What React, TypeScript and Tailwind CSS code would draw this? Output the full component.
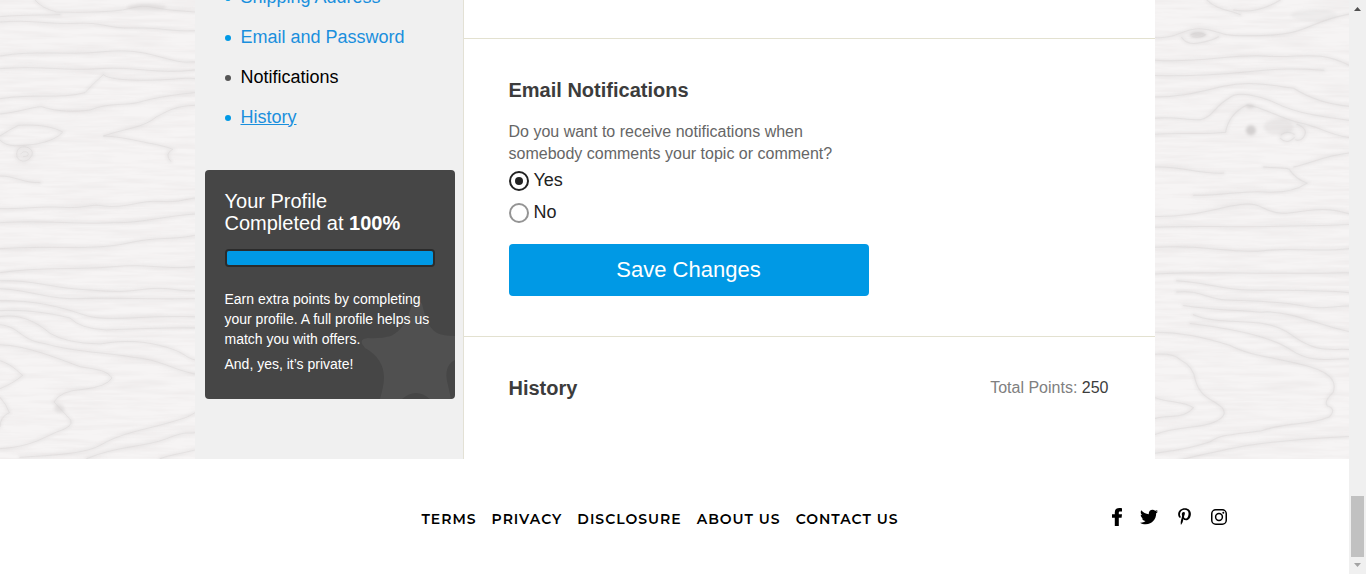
import { useState } from "react";
import type { ReactNode } from "react";
import { FaTwitter, FaPinterestP } from "react-icons/fa";

const leftGrain = [
  "M105 0 Q125 25 170 36 C260 38 300 36 350 32 S410 12 460 22 S540 32 585 36",
  "M0 50 C70 44 130 46 180 44",
  "M0 66 C90 58 150 74 230 70 S320 86 400 84 S520 96 585 92",
  "M0 168 C100 150 200 166 300 156 S440 160 500 176 S560 184 585 186",
  "M0 206 C120 196 200 214 300 206 S470 224 585 210",
  "M0 296 C100 280 180 298 255 278 Q280 250 310 224 C330 240 400 242 470 240 S550 232 585 236",
  "M0 342 C60 336 90 322 125 320 C170 336 230 336 270 330 C330 306 380 318 420 306 S520 284 585 278",
  "M0 408 Q30 388 55 376 C110 372 160 380 188 396 Q170 420 110 432 C60 438 20 444 0 420",
  "M585 316 C520 318 500 336 470 350 C430 384 380 384 310 408 C360 410 400 420 440 428 S500 440 518 448 Q492 462 512 484",
  "M50 462 Q50 440 75 440 Q102 446 96 466 Q80 492 58 480 Q48 472 50 462",
  "M62 462 Q70 450 84 458 Q88 470 70 470",
  "M0 528 C40 526 70 550 120 548",
  "M0 626 C60 628 120 618 190 622 S270 610 310 618 C380 626 420 600 480 604 S550 598 585 594",
  "M0 668 C120 660 240 674 340 668 C420 670 480 650 585 642",
  "M0 746 C150 736 280 752 380 730 S500 722 585 706",
  "M0 818 C120 800 240 810 340 800 S500 810 585 800",
  "M0 842 C100 840 150 862 240 868 S360 878 430 868 S540 876 585 872",
  "M0 866 C90 870 150 900 240 896 S400 898 585 896",
  "M0 902 C100 900 180 920 250 944 S400 946 585 950",
  "M0 932 C60 928 140 936 210 954 Q240 986 320 990 S480 982 585 984",
  "M0 950 C60 940 110 966 150 1000 Q200 1030 300 1032 C380 1018 440 1024 500 1042 S550 1070 585 1080",
  "M0 974 C60 980 60 1020 130 1030 C230 1058 330 1058 400 1072 C480 1078 520 1110 585 1122",
  "M0 1034 C80 1036 180 1078 240 1100 C300 1110 320 1112 336 1134 Q320 1160 250 1168 Q180 1172 162 1206 Q190 1236 212 1260 Q222 1280 170 1296 C120 1318 90 1340 0 1346",
  "M0 1082 C40 1096 50 1112 68 1126 Q40 1150 0 1166 M0 1192 Q20 1214 28 1238 Q0 1250 0 1280",
  "M60 1372 C140 1366 250 1364 300 1336 C360 1300 430 1290 500 1270 S560 1252 585 1238",
  "M260 1376 C340 1340 440 1340 500 1316 S560 1302 585 1298",
  "M480 1376 C510 1364 550 1360 585 1350",
];

const rightGrain = [
  "M170 0 C200 30 240 30 270 44 M250 30 C300 38 340 30 390 0",
  "M15 112 C80 118 100 84 150 86 S200 104 250 106 S360 110 420 98 S500 60 597 42",
  "M95 112 Q110 136 150 128 T205 110 M122 104 Q145 92 166 104 Q150 116 126 110",
  "M15 226 C120 230 220 222 300 214 S430 204 520 210",
  "M15 180 C150 190 250 160 350 168 S500 146 597 196",
  "M15 290 C100 290 160 272 220 258 C300 240 380 258 430 264 C480 296 530 312 597 318",
  "M15 354 C70 348 110 360 150 358 C190 350 190 320 236 294 C260 270 330 286 380 310 C440 340 520 350 597 360",
  "M15 402 C90 396 160 404 226 396 Q236 340 290 314 C340 320 390 356 450 368 S530 402 597 412",
  "M392 404 Q408 388 432 402 M390 414 Q410 434 432 412 M440 372 Q476 386 460 410 Q450 424 436 418",
  "M340 500 C370 504 400 500 416 506 Q436 536 470 548 C430 576 380 578 330 574 S200 588 130 584",
  "M430 500 C480 490 520 466 597 458",
  "M15 500 C90 496 140 520 220 518",
  "M15 648 C130 650 200 622 270 612 S340 640 400 638 S510 612 597 640",
  "M15 680 C150 674 300 684 597 672",
  "M15 740 C160 730 240 760 340 750 S500 756 597 744",
  "M15 820 C170 810 320 822 597 816",
  "M80 840 C180 846 200 866 300 868 S500 866 597 876",
  "M80 874 C150 866 170 896 230 898 S400 902 460 916 S550 914 597 916",
  "M100 914 C200 930 260 926 330 934 C420 926 520 980 597 992",
  "M130 942 C220 980 340 940 420 1000 S540 1042 597 1046",
  "M120 968 C220 980 350 1000 420 1046 S540 1070 597 1074",
  "M15 994 C100 994 180 1014 240 1034 C300 1066 380 1070 450 1090 C540 1110 560 1140 548 1174 Q520 1200 530 1214 Q560 1224 536 1248 C470 1276 420 1260 330 1290 C250 1300 210 1300 180 1322 C120 1344 60 1350 15 1356",
  "M15 1060 Q70 1056 90 1076 Q130 1096 136 1138 C150 1190 190 1196 216 1220 Q236 1244 190 1264 C150 1282 80 1274 15 1300",
  "M15 1190 C60 1206 100 1200 130 1220 Q110 1246 60 1246 Q30 1248 15 1252",
  "M90 1376 C180 1356 250 1336 340 1326 S500 1310 597 1306",
];

type Knot = { cx: number; cy: number; rx: number; ry: number; opacity: number };

const leftKnots: Knot[] = [
  { cx: 440, cy: 22, rx: 60, ry: 12, opacity: 0.35 },
  { cx: 178, cy: 1226, rx: 16, ry: 14, opacity: 0.35 },
];

const rightKnots: Knot[] = [
  { cx: 302, cy: 390, rx: 15, ry: 15, opacity: 0.9 },
  { cx: 300, cy: 318, rx: 12, ry: 7, opacity: 0.6 },
  { cx: 385, cy: 380, rx: 45, ry: 24, opacity: 0.3 },
  { cx: 144, cy: 103, rx: 22, ry: 8, opacity: 0.6 },
  { cx: 490, cy: 45, rx: 70, ry: 18, opacity: 0.2 },
];

type WoodProps = { id: string; grain: string[]; knots: Knot[]; viewBox: string };

function WoodPanel({ id, grain, knots, viewBox }: WoodProps) {
  return (
    <div className="relative min-w-0 overflow-hidden bg-[#f6f4f4]" aria-hidden="true">
      <svg className="absolute inset-0 h-full w-full" viewBox={viewBox} preserveAspectRatio="xMinYMin slice">
        <defs>
          <filter id={`${id}-noise`} x="0" y="0" width="100%" height="100%" colorInterpolationFilters="sRGB">
            <feTurbulence type="fractalNoise" baseFrequency="0.006 0.07" numOctaves="3" seed="4" />
            <feColorMatrix values="0 0 0 0 0.86  0 0 0 0 0.84  0 0 0 0 0.84  0.5 0 0 0 -0.18" />
          </filter>
          <filter id={`${id}-soft`} x="-50%" y="-50%" width="200%" height="200%">
            <feGaussianBlur stdDeviation="5" />
          </filter>
        </defs>
        <rect width="620" height="1380" filter={`url(#${id}-noise)`} />
        <g fill="none" strokeLinecap="round">
          <g filter={`url(#${id}-soft)`}>
            {grain.map((d) => (
              <path key={d} d={d} stroke="#dad6d6" strokeOpacity="0.35" strokeWidth="12" />
            ))}
            {knots.map((k) => (
              <ellipse key={`${k.cx}-${k.cy}`} cx={k.cx} cy={k.cy} rx={k.rx} ry={k.ry} fill="#cfcccc" fillOpacity={k.opacity} />
            ))}
          </g>
          {grain.map((d) => (
            <path key={d} d={d} stroke="#d0cccc" strokeOpacity="0.3" strokeWidth="3" />
          ))}
        </g>
      </svg>
    </div>
  );
}

const navItems = [
  { label: "Shipping Address", dot: "bg-[#0099e5]", text: "text-[#1a8fdd]" },
  { label: "Email and Password", dot: "bg-[#0099e5]", text: "text-[#1a8fdd]" },
  { label: "Notifications", dot: "bg-[#555555]", text: "text-black" },
  { label: "History", dot: "bg-[#0099e5]", text: "text-[#1a8fdd] underline" },
];

function Sidebar() {
  return (
    <aside className="w-[269px] shrink-0 border-r border-[#e3e1d5] bg-[#f0f0f0]">
      <nav aria-label="Profile" className="flex h-[137px] flex-col justify-end overflow-hidden pl-[30px]">
        <ul>
          {navItems.map((item) => (
            <li key={item.label} className="flex h-10 items-center gap-2.5 text-[18px]">
              <span className={`mt-0.5 h-1.5 w-1.5 rounded-full ${item.dot}`} />
              <a href="#" className={item.text}>{item.label}</a>
            </li>
          ))}
        </ul>
      </nav>
      <ProfileCard />
    </aside>
  );
}

function ProfileCard() {
  return (
    <section className="relative mx-2 mt-[33px] ml-2.5 overflow-hidden rounded bg-[#464646] px-5 pt-5 pb-[25px] text-[14px] leading-5 text-white">
      <svg className="absolute right-0 bottom-0 h-[104px] w-[95px]" viewBox="0 0 95 104" aria-hidden="true">
        <path
          fill="#505050"
          d="M52 9Q57 1 62 9C65 21 68 33 77 38Q83 41 95 41V65C88 68 84 77 88 90L91 104H70Q56 92 42 104H20C22 96 24 90 24 82C24 71 18 60 5 53Q-3 44 8 43Q19 44 31 41C41 36 48 25 52 9Z"
        />
      </svg>
      <div className="relative">
        <h2 className="text-[20px] leading-[22px]">
          Your Profile<br />Completed at <strong>100%</strong>
        </h2>
        <div
          role="progressbar"
          aria-label="Profile completion"
          aria-valuenow={100}
          aria-valuemin={0}
          aria-valuemax={100}
          className="mt-[15px] h-[18px] rounded border-2 border-[#2b2b2b]"
        >
          <div className="h-full w-full rounded-xs bg-[#0099e5]" />
        </div>
        <p className="mt-[22px]">Earn extra points by completing your profile. A full profile helps us match you with offers.</p>
        <p className="mt-[5px]">And, yes, it’s private!</p>
      </div>
    </section>
  );
}

function NotificationForm() {
  const [choice, setChoice] = useState("Yes");
  return (
    <form className="border-b border-[#e3e1d0] px-[45px] py-10" onSubmit={(e) => e.preventDefault()}>
      <h2 className="text-[20px] leading-[22px] font-bold text-[#3c3c3c]">Email Notifications</h2>
      <fieldset className="mt-5 max-w-[360px]">
        <legend className="text-[16px] leading-[22px] text-[#666666]">
          Do you want to receive notifications when somebody comments your topic or comment?
        </legend>
        {["Yes", "No"].map((option) => (
          <label key={option} className="flex h-8 items-center gap-[5px] pb-0.5 text-[18px] text-[#222222]">
            <input
              type="radio"
              name="notify"
              value={option}
              checked={choice === option}
              onChange={() => setChoice(option)}
              className="mt-0.5 grid h-5 w-5 appearance-none place-items-center rounded-full border-2 border-[#949494] before:h-2 before:w-2 before:rounded-full checked:border-[#222222] checked:before:bg-[#222222]"
            />
            {option}
          </label>
        ))}
      </fieldset>
      <button type="submit" className="mt-[15px] block h-[52px] w-[360px] max-w-full rounded bg-[#0099e5] pb-0.5 text-[22px] text-white">
        Save Changes
      </button>
    </form>
  );
}

const footerLinks = ["TERMS", "PRIVACY", "DISCLOSURE", "ABOUT US", "CONTACT US"];

const socials: { label: string; icon: ReactNode }[] = [
  {
    label: "Facebook",
    icon: (
      <svg width="10" height="18" viewBox="0 0 10 18" fill="currentColor">
        <path d="M10 .2V3.6H8.2C7.1 3.6 6.8 4 6.8 4.9V6.2H10L9.6 9.8H6.8V18H2.8V9.8H0V6.2H2.8V4.2C2.8 1.5 4.4 0 7.2 0C8.4 0 9.5.1 10 .2Z" />
      </svg>
    ),
  },
  { label: "Twitter", icon: <FaTwitter size={18} /> },
  { label: "Pinterest", icon: <FaPinterestP size={17} /> },
  {
    label: "Instagram",
    icon: (
      <svg width="16" height="16" viewBox="0 0 16 16" fill="none" stroke="currentColor" strokeWidth="1.5">
        <rect x=".75" y=".75" width="14.5" height="14.5" rx="4" />
        <circle cx="8" cy="8" r="3.4" />
        <circle cx="12.3" cy="3.7" r="1" fill="currentColor" stroke="none" />
      </svg>
    ),
  },
];

function Footer() {
  return (
    <footer className="flex h-[115px] items-center justify-center pt-1.5 text-black">
      <div className="grid w-full max-w-[1140px] grid-cols-[1fr_auto_1fr] items-center pr-[18px]">
        <nav aria-label="Footer" className="col-start-2 mr-[11px] flex gap-[15px] font-['Montserrat','Inter',sans-serif] text-[14px] font-semibold tracking-[1px]">
          {footerLinks.map((label) => (
            <a key={label} href="#">{label}</a>
          ))}
        </nav>
        <div className="flex items-center justify-end gap-[18px] pb-1.5">
          {socials.map(({ label, icon }) => (
            <a key={label} href="#" aria-label={label}>{icon}</a>
          ))}
        </div>
      </div>
    </footer>
  );
}

function ScrollTrack() {
  return (
    <div className="flex w-[17px] shrink-0 flex-col items-center bg-[#f0f0f0] py-[7px]" aria-hidden="true">
      <svg width="7" height="4" viewBox="0 0 7 4"><path fill="#505050" d="M3.5 0L7 4H0Z" /></svg>
      <div className="mt-auto mb-1.5 h-[61px] w-[13px] bg-[#c1c1c1]" />
      <svg width="7" height="4" viewBox="0 0 7 4"><path fill="#a3a3a3" d="M3.5 4L7 0H0Z" /></svg>
    </div>
  );
}

export default function App() {
  return (
    <div className="flex min-h-screen bg-white font-['Liberation_Sans',Arial,sans-serif]">
      <div className="flex min-w-0 flex-1 flex-col">
        <div className="grid flex-1 grid-cols-[1fr_minmax(0,960px)_1fr]">
          <WoodPanel id="left" grain={leftGrain} knots={leftKnots} viewBox="0 0 585 1377" />
          <div className="flex">
            <Sidebar />
            <main className="min-w-0 flex-1 bg-white">
              <div className="h-[39px] border-b border-[#e3e1d0]" />
              <NotificationForm />
              <section className="flex items-center justify-between pt-10 pr-[46px] pl-[45px]">
                <h2 className="text-[20px] leading-[22px] font-bold text-[#3c3c3c]">History</h2>
                <p className="text-[16px] leading-[22px] text-[#808080]">
                  Total Points: <span className="text-[#3c3c3c]">250</span>
                </p>
              </section>
            </main>
          </div>
          <WoodPanel id="right" grain={rightGrain} knots={rightKnots} viewBox="15 0 582 1377" />
        </div>
        <Footer />
      </div>
      <ScrollTrack />
    </div>
  );
}
